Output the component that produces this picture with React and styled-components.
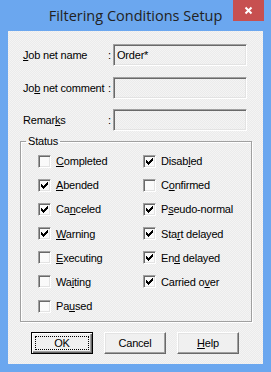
import React from "react";
import styled, { createGlobalStyle, css } from "styled-components";

const Global = createGlobalStyle`
  html, body { margin: 0; padding: 0; background: #6ba7ef; }
  * { box-sizing: border-box; }
`;

const dither = css`
  background-color: #f0f0f0;
  background-image: repeating-conic-gradient(#f4f4f4 0 25%, #ebebeb 0 50%);
  background-size: 2px 2px;
`;

const Window = styled.div`
  width: 271px;
  height: 372px;
  background: #6ba7ef;
  display: flex;
  flex-direction: column;
  font-family: "Liberation Sans", Arial, sans-serif;
  font-size: 11px;
  letter-spacing: -0.2px;
  color: #000;
`;

const TitleBar = styled.div`
  height: 31px;
  display: grid;
  grid-template-columns: 1fr auto 1fr;
  align-items: start;
`;

const Title = styled.div`
  grid-column: 2;
  font-family: "Open Sans", "Noto Sans", sans-serif;
  font-size: 14.5px;
  letter-spacing: 0;
  color: #222;
  line-height: 20px;
  padding-top: 6px;
  white-space: nowrap;
`;

const CloseBtn = styled.div`
  grid-column: 3;
  justify-self: end;
  margin-right: 7px;
  width: 31px;
  height: 21px;
  background: #c75050;
  display: flex;
  align-items: center;
  justify-content: center;
`;

const Client = styled.div`
  ${dither};
  margin: 0 8px;
  height: 333px;
  padding: 13px 11px 0 12px;
  display: flex;
  flex-direction: column;
`;

const Form = styled.div`
  margin-left: 3px;
  display: grid;
  grid-template-columns: 85px 5px 134px;
  grid-auto-rows: 22px;
  row-gap: 10.5px;
  align-items: center;
`;

const Label = styled.div`
  white-space: nowrap;
`;

const Colon = styled.div``;

const Field = styled.div`
  ${dither};
  height: 22px;
  border: 1px solid;
  border-color: #a0a0a0 #fff #fff #a0a0a0;
  box-shadow: inset 1px 1px 0 #696969, inset -1px -1px 0 #e3e3e3;
  padding: 0 3px;
  display: flex;
  align-items: center;
  font-size: 11px;
`;

const Group = styled.fieldset`
  margin: 4px 0 0 0;
  padding: 0 0 3px 0;
  border: 1px solid #a0a0a0;
  box-shadow: 1px 1px 0 #fff, inset 1px 1px 0 #fff;
  min-width: 0;
`;

const Legend = styled.legend`
  margin-left: 5px;
  padding: 0 2px;
  line-height: 13px;
  font-size: 11px;
`;

const Grid = styled.div`
  display: grid;
  grid-template-columns: 105px 1fr;
  grid-auto-flow: column;
  grid-template-rows: repeat(7, 24.17px);
  padding: 1px 0 0 17px;
`;

const Row = styled.div`
  display: flex;
  align-items: center;
  gap: 5px;
  white-space: nowrap;
`;

const Box = styled.span`
  width: 13px;
  height: 13px;
  flex: none;
  border: 1px solid;
  border-color: #a0a0a0 #fff #fff #a0a0a0;
  box-shadow: inset 1px 1px 0 #696969, inset -1px -1px 0 #e3e3e3;
  background: #fafafa;
  display: flex;
  align-items: center;
  justify-content: center;
`;

const Buttons = styled.div`
  display: flex;
  gap: 11px;
  margin: 10px 0 0 11px;
`;

const Button = styled.div`
  width: 62px;
  height: 22px;
  background: #f0f0f0;
  border: 1px solid;
  border-color: #fff #696969 #696969 #fff;
  box-shadow: inset -1px -1px 0 #a0a0a0, inset 1px 1px 0 #e3e3e3;
  display: flex;
  align-items: center;
  justify-content: center;
  font-size: 11px;
  ${(p) =>
    p.$default &&
    css`
      border-color: #000;
      box-shadow: inset 1px 1px 0 #fff, inset -1px -1px 0 #696969,
        inset -2px -2px 0 #a0a0a0;
      padding: 3px;
    `}
`;

const Focus = styled.span`
  flex: 1;
  align-self: stretch;
  border: 1px dotted #000;
  display: flex;
  align-items: center;
  justify-content: center;
`;

const Check = () => (
  <svg width="7" height="7" viewBox="0 0 7 7" shapeRendering="crispEdges">
    <path
      fill="#000"
      d="M6 0h1v1h-1zM5 1h2v1h-2zM0 2h1v1h-1zM4 2h3v1h-3zM0 3h2v1h-2zM3 3h3v1h-3zM0 4h5v1h-5zM1 5h3v1h-3zM2 6h1v1h-1z"
    />
  </svg>
);

const Cb = ({ checked, children }) => (
  <Row>
    <Box>{checked && <Check />}</Box>
    <span>{children}</span>
  </Row>
);

export default function App() {
  return (
    <>
      <Global />
      <Window>
        <TitleBar>
          <Title>Filtering Conditions Setup</Title>
          <CloseBtn>
            <svg width="9" height="9" viewBox="0 0 9 9">
              <path d="M1.5 1.5L7.5 7.5M7.5 1.5L1.5 7.5" stroke="#fff" strokeWidth="2" />
            </svg>
          </CloseBtn>
        </TitleBar>
        <Client>
          <Form>
            <Label>
              <u>J</u>ob net name
            </Label>
            <Colon>:</Colon>
            <Field>Order*</Field>
            <Label>
              Jo<u>b</u> net comment
            </Label>
            <Colon>:</Colon>
            <Field />
            <Label>
              Remar<u>k</u>s
            </Label>
            <Colon>:</Colon>
            <Field />
          </Form>
          <Group>
            <Legend>Status</Legend>
            <Grid>
              <Cb>
                <u>C</u>ompleted
              </Cb>
              <Cb checked>
                <u>A</u>bended
              </Cb>
              <Cb checked>
                Ca<u>n</u>celed
              </Cb>
              <Cb checked>
                <u>W</u>arning
              </Cb>
              <Cb>
                <u>E</u>xecuting
              </Cb>
              <Cb>
                Wa<u>i</u>ting
              </Cb>
              <Cb>
                Pa<u>u</u>sed
              </Cb>
              <Cb checked>
                Disab<u>l</u>ed
              </Cb>
              <Cb>
                C<u>o</u>nfirmed
              </Cb>
              <Cb checked>
                P<u>s</u>eudo-normal
              </Cb>
              <Cb checked>
                Sta<u>r</u>t delayed
              </Cb>
              <Cb checked>
                En<u>d</u> delayed
              </Cb>
              <Cb checked>
                Carried o<u>v</u>er
              </Cb>
            </Grid>
          </Group>
          <Buttons>
            <Button $default>
              <Focus>OK</Focus>
            </Button>
            <Button>Cancel</Button>
            <Button>
              <span>
                <u>H</u>elp
              </span>
            </Button>
          </Buttons>
        </Client>
      </Window>
    </>
  );
}
